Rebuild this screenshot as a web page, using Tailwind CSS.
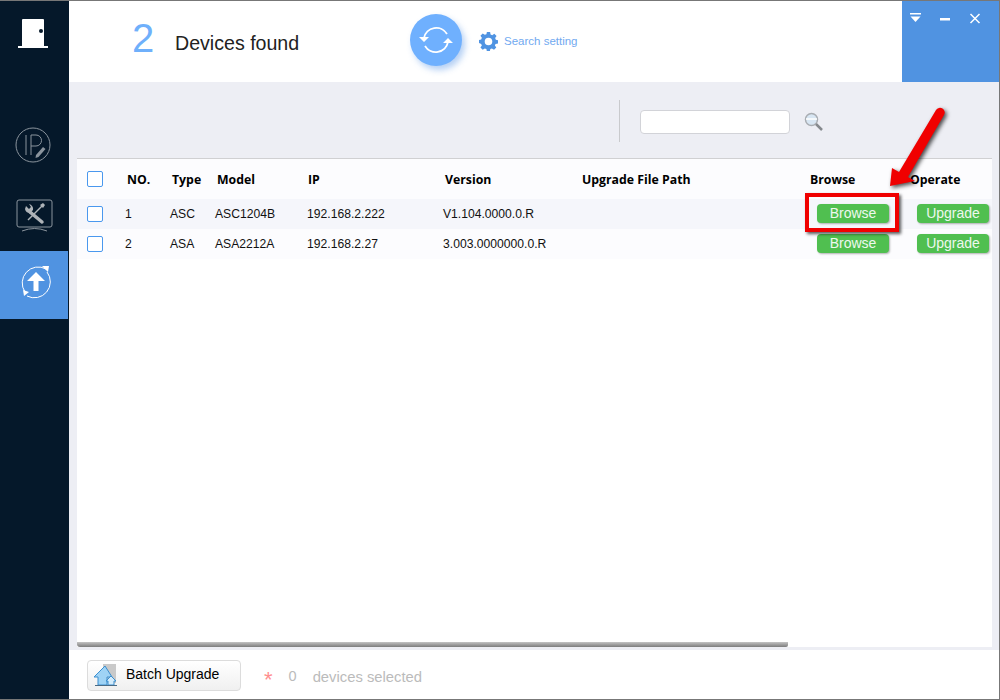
<!DOCTYPE html>
<html lang="en">
<head>
    <meta charset="UTF-8">
    <title>Device Upgrade</title>
    <script src="https://cdn.jsdelivr.net/npm/@tailwindcss/browser@4"></script>
</head>
<body class="bg-white font-['Liberation_Sans',sans-serif] text-[#111]">
<div class="relative w-[1000px] h-[700px] flex overflow-hidden border-t border-b border-r border-[#777]">

    <!-- sidebar -->
    <div class="w-[69px] shrink-0 bg-[#05182a] flex flex-col">
        <div class="h-[250px] pt-[17px] flex flex-col items-center">
            <svg width="32" height="31" viewBox="0 0 32 31" class="mr-[3px]">
                <path d="M6 1h20a1 1 0 0 1 1 1v26H5V2a1 1 0 0 1 1-1z" fill="#fff"/>
                <rect x="1" y="28" width="30" height="2" fill="#fff"/>
                <circle cx="24" cy="13" r="2" fill="#05182a"/>
            </svg>
            <svg width="36" height="36" viewBox="0 0 36 36" class="mt-[78px] mr-[3px]" fill="none" stroke="#8b949d" stroke-width="1">
                <circle cx="18" cy="18" r="17"/>
                <path d="M11 8v20M16 28V8h5a5.500 5.500 0 0 1 0 11h-5"/>
                <path d="M21 28l7-8 2.500 2-7 8-3 1z" fill="#8b949d" stroke="none"/>
            </svg>
            <svg width="37" height="33" viewBox="0 0 37 33" class="mt-[36px]" fill="none" stroke="#8b949d" stroke-width="1">
                <rect x="1" y="1" width="35" height="27" rx="2"/>
                <path d="M6 32q12.500-5 25 0"/>
                <path d="M14 13l12 10" stroke="#aeb3b8" stroke-width="3.500" stroke-linecap="round"/>
                <path d="M26 7L12 21" stroke="#aeb3b8" stroke-width="1.500"/>
                <path d="M10 7l3 3 2-2-2-3a5 5 0 0 1 4 6l-3 3a5 5 0 0 1-5-4z" fill="#aeb3b8" stroke="none"/>
                <path d="M24 6l3-2 2 2-2 3z" fill="#aeb3b8" stroke="none"/>
            </svg>
        </div>
        <div class="h-[68px] w-[68px] bg-[#5093e1] flex items-center justify-center">
            <svg width="36" height="36" viewBox="0 0 36 36" class="ml-[4px] mt-[-6px]" fill="none" stroke="#fff" stroke-width="1">
                <path d="M7 28A16 16 0 0 1 28 5"/>
                <path d="M29 8A16 16 0 0 1 9 32"/>
                <path d="M24 2l7 0-1 6zM5 26l6 2-5 4z" fill="#fff" stroke="none"/>
                <path d="M18 8l9 9h-6.500v10h-5V17H9z" fill="#fff" stroke="none"/>
            </svg>
        </div>
    </div>

    <!-- main -->
    <div class="flex-1 flex flex-col min-w-0">

        <!-- header -->
        <div class="h-[81px] shrink-0 flex">
            <div class="flex-1 flex items-center pl-[63px]">
                <span class="w-[43px] text-[40px] leading-none text-[#6fb0fb] mb-[7px]">2</span>
                <span class="w-[235px] text-[19.600px] text-[#222] mt-[4px]">Devices found</span>
                <div class="w-[52px] h-[52px] mb-[3px] rounded-full bg-[#6fb0fe] shadow-[3px_4px_6px_rgba(90,150,230,0.45)] flex items-center justify-center">
                    <svg width="34" height="34" viewBox="0 0 34 34" fill="none" stroke="#fff" stroke-width="1.800">
                        <path d="M5 15A12.500 12.500 0 0 1 28 11"/>
                        <path d="M29 19A12.500 12.500 0 0 1 6 23"/>
                        <path d="M0 14h10l-5 5zM24 20h10l-5-5z" fill="#fff" stroke="none"/>
                    </svg>
                </div>
                <svg width="19" height="19" viewBox="0 0 20 20" class="ml-[17px] mb-[1px]">
                    <path d="M8.300 0h3.400l.5 2.600 1.700.7 2.200-1.500 2.400 2.400-1.500 2.200.7 1.700 2.300.5v3.400l-2.600.5-.7 1.700 1.500 2.200-2.400 2.400-2.200-1.500-1.700.7-.5 2.600H8.300l-.5-2.600-1.700-.7-2.200 1.500-2.400-2.400 1.500-2.200-.7-1.700L0 11.700V8.300l2.300-.5.7-1.700-1.500-2.200 2.400-2.400 2.200 1.500 1.700-.7zM10 6a4 4 0 1 0 0 8 4 4 0 0 0 0-8z" fill="#4f93e2" fill-rule="evenodd"/>
                </svg>
                <span class="ml-[6px] text-[11.500px] text-[#71a9f0]">Search setting</span>
            </div>
            <div class="relative w-[97px] bg-[#5093e1]">
                <svg width="80" height="16" viewBox="0 0 80 16" class="absolute left-[7px] top-[11px]" fill="#fff" stroke="#fff">
                    <rect x="1" y="1" width="11" height="1.500" stroke="none"/>
                    <path d="M1.500 4.500h10L6.500 10z" stroke="none"/>
                    <rect x="31" y="6" width="10" height="2.500" stroke="none"/>
                    <path d="M61.500 2l9 9M70.500 2l-9 9" stroke-width="1.500" fill="none"/>
                </svg>
            </div>
        </div>

        <!-- toolbar -->
        <div class="h-[76px] shrink-0 bg-[#edeef4] flex items-center pl-[550px]">
            <div class="w-px h-[42px] bg-[#c9cacd] mt-[1px]"></div>
            <div class="ml-[20px] w-[150px] h-[24px] mt-[4px] rounded-[4px] bg-white border border-[#d2d3d8]"></div>
            <svg width="20" height="20" viewBox="0 0 20 20" class="ml-[14px] mt-[4px]" fill="none">
                <circle cx="7.500" cy="7.500" r="6" fill="#d8e6f3" stroke="#a9adb2" stroke-width="1.500"/>
                <path d="M2 7h11" stroke="#fff" stroke-width="1.500"/>
                <path d="M12 12l6 6" stroke="#85898d" stroke-width="2.500"/>
            </svg>
        </div>

        <!-- table area -->
        <div class="flex-1 min-h-0 bg-[#edeef4] pl-[8px] pr-[7px] pb-[3px]">
            <div class="h-full bg-white border-t border-[#d0d0d2] flex flex-col">
                <div class="flex-1 min-h-0">
                    <div class="h-[40px] bg-[#fcfcfe] grid grid-cols-[50px_45px_45px_91px_137px_137px_228px_100px_82px] items-center text-[12.300px] font-bold font-['Open_Sans',sans-serif] text-black whitespace-nowrap">
                        <span class="pl-[10px]"><span class="block w-[16px] h-[16px] mb-[1px] border border-[#4a98ee] rounded-[2px] bg-white"></span></span>
                        <span class="mt-[2px]">NO.</span>
                        <span class="mt-[2px]">Type</span>
                        <span class="mt-[2px]">Model</span>
                        <span class="mt-[2px]">IP</span>
                        <span class="mt-[2px]">Version</span>
                        <span class="mt-[2px]">Upgrade File Path</span>
                        <span class="mt-[2px]">Browse</span>
                        <span class="mt-[2px]">Operate</span>
                    </div>
                    <div class="h-[30px] bg-[#f5f6fb] grid grid-cols-[48px_45px_45px_92px_136px_374px_100px_72px] items-center text-[12.150px]">
                        <span class="pl-[10px]"><span class="block w-[16px] h-[16px] border border-[#4a98ee] rounded-[2px] bg-white"></span></span>
                        <span>1</span>
                        <span>ASC</span>
                        <span>ASC1204B</span>
                        <span>192.168.2.222</span>
                        <span>V1.104.0000.0.R</span>
                        <button class="w-[72px] h-[19px] mb-[2px] rounded-[4px] bg-[#50bf50] text-[#eef8ee] text-[14px] leading-none shadow-[1px_1px_2px_rgba(0,0,0,0.3)]">Browse</button>
                        <button class="w-[72px] h-[19px] mb-[2px] rounded-[4px] bg-[#50bf50] text-[#eef8ee] text-[14px] leading-none shadow-[1px_1px_2px_rgba(0,0,0,0.3)]">Upgrade</button>
                    </div>
                    <div class="h-[30px] bg-[#fcfcfe] grid grid-cols-[48px_45px_45px_92px_136px_374px_100px_72px] items-center text-[12.150px]">
                        <span class="pl-[10px]"><span class="block w-[16px] h-[16px] border border-[#4a98ee] rounded-[2px] bg-white"></span></span>
                        <span>2</span>
                        <span>ASA</span>
                        <span>ASA2212A</span>
                        <span>192.168.2.27</span>
                        <span>3.003.0000000.0.R</span>
                        <button class="w-[72px] h-[19px] mb-[2px] rounded-[4px] bg-[#50bf50] text-[#eef8ee] text-[14px] leading-none shadow-[1px_1px_2px_rgba(0,0,0,0.3)]">Browse</button>
                        <button class="w-[72px] h-[19px] mb-[2px] rounded-[4px] bg-[#50bf50] text-[#eef8ee] text-[14px] leading-none shadow-[1px_1px_2px_rgba(0,0,0,0.3)]">Upgrade</button>
                    </div>
                </div>
                <div class="w-[711px] h-[5px] rounded-bl-[3px] rounded-br-[2px] bg-gradient-to-b from-[#c4c4c4] to-[#7d7d7d]"></div>
            </div>
        </div>

        <!-- footer -->
        <div class="h-[49px] shrink-0 bg-white flex items-center pl-[18px]">
            <button class="w-[154px] h-[31px] mt-[1px] rounded-[4px] border border-[#dcdcdc] bg-gradient-to-b from-white to-[#f0f0f0] flex items-center text-[14px] text-black">
                <svg width="25" height="24" viewBox="0 0 25 24" class="ml-[5px] shrink-0" fill="none">
                    <rect x="10" y="1" width="13" height="19" fill="#c9c9c9"/>
                    <path d="M12 3L1 14h4v8h9v-8h5z" fill="#9fd3f5" stroke="#3b8fd0"/>
                    <path d="M18 13l-5 5h2v4h6v-4h2z" fill="#d4ecfb" stroke="#3b8fd0"/>
                    <path d="M2 22.500h22" stroke="#4a6b85"/>
                </svg>
                <span class="ml-[8px] mb-[2px]">Batch Upgrade</span>
            </button>
            <span class="ml-[23px] mt-[10px] text-[22px] leading-none text-[#ff8f8f]">*</span>
            <span class="ml-[16px] mt-[5px] text-[14.500px] text-[#bbb]">0</span>
            <span class="ml-[16px] mt-[5px] text-[14.800px] text-[#bbb]">devices selected</span>
        </div>
    </div>

    <!-- annotation drawn over the screenshot -->
    <div class="absolute left-[805px] top-[192px] w-[94px] h-[39px] border-4 border-[#f00000] shadow-[2px_2px_3px_rgba(0,0,0,0.65)]"></div>
    <svg width="70" height="90" viewBox="0 0 70 90" class="absolute left-[885px] top-[102px] drop-shadow-[2px_2px_2px_rgba(0,0,0,0.7)]">
        <path d="M5 83L7 65l7 4L51 7a4.500 4.500 0 0 1 8 5L23 74l7 4z" fill="#f00000"/>
    </svg>
</div>
</body>
</html>
